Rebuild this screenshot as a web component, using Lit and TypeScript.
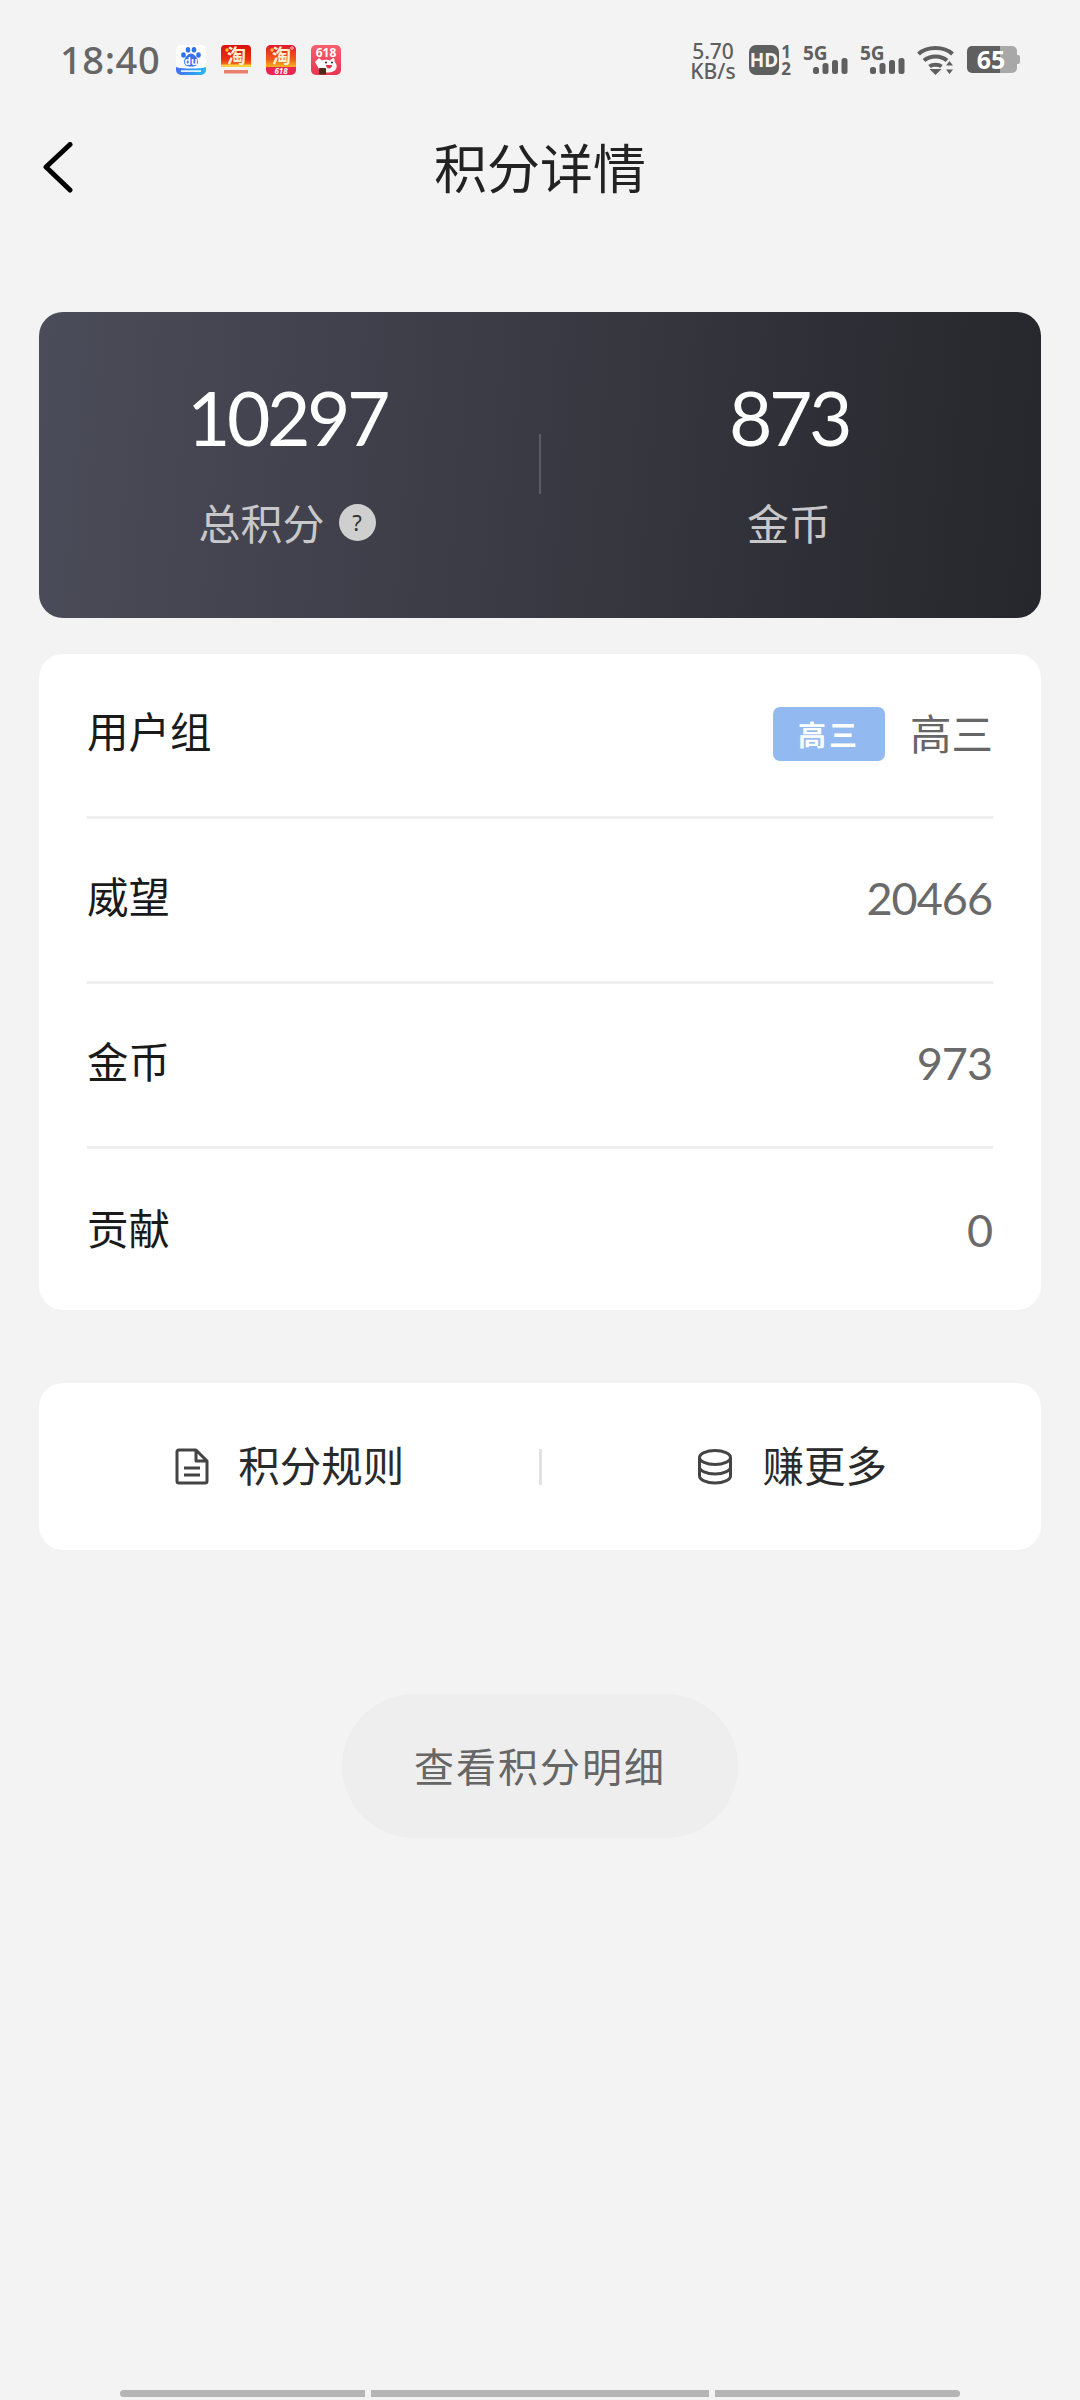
import { LitElement, html, css, svg } from "lit";
import { customElement } from "lit/decorators.js";

const baidu = svg`<svg class="app" viewBox="0 0 30 30">
  <defs><linearGradient id="bd" x1="0" x2="1"><stop offset="0" stop-color="#4a6cf5"/><stop offset="1" stop-color="#22bdf2"/></linearGradient></defs>
  <rect width="30" height="30" rx="5" fill="#fff"/>
  <path d="M0 22c5 2 25 2 30 0v3a5 5 0 0 1-5 5H5a5 5 0 0 1-5-5z" fill="url(#bd)"/>
  <rect x="5" y="25.200" width="20" height="1.800" fill="#dff0ff"/>
  <ellipse cx="7.500" cy="10" rx="2.300" ry="2.800" fill="#2c74ea"/><ellipse cx="12" cy="4.800" rx="2.300" ry="2.800" fill="#2c74ea"/>
  <ellipse cx="18" cy="4.800" rx="2.300" ry="2.800" fill="#2c74ea"/><ellipse cx="22.500" cy="10" rx="2.300" ry="2.800" fill="#2c74ea"/>
  <path d="M15 8.500c-3 0-7 4.500-7 8.500 0 3 2.500 4.500 7 4.500s7-1.500 7-4.500c0-4-4-8.500-7-8.500z" fill="#3b6ff0"/>
  <text x="15" y="19.500" class="du">du</text>
</svg>`;

const tao1 = svg`<svg class="app" viewBox="0 0 30 30">
  <defs><linearGradient id="t1" x1="0" y1="0" x2="0" y2="1"><stop offset="0" stop-color="#d8120e"/><stop offset="0.65" stop-color="#ea2f12"/><stop offset="1" stop-color="#f98e1c"/></linearGradient></defs>
  <path d="M4 0h22a4 4 0 0 1 4 4v18H0V4a4 4 0 0 1 4-4z" fill="url(#t1)"/>
  <rect y="19.500" width="30" height="2.500" fill="#fdd040"/>
  <circle cx="6" cy="5" r="1.700" fill="#ffc928"/>
  <text x="15.500" y="18" class="tao">淘</text>
  <rect x="3" y="25" width="24" height="3.500" fill="#e5604c" opacity=".8"/>
</svg>`;

const tao2 = svg`<svg class="app" viewBox="0 0 30 30">
  <defs><linearGradient id="t2" x1="0" y1="0" x2="0" y2="1"><stop offset="0" stop-color="#e3172d"/><stop offset="0.65" stop-color="#ef5a1a"/><stop offset="1" stop-color="#fbb321"/></linearGradient></defs>
  <rect width="30" height="30" rx="5" fill="#ea2550"/>
  <path d="M0 5a5 5 0 0 1 5-5h20a5 5 0 0 1 5 5v17H0z" fill="url(#t2)"/>
  <circle cx="6" cy="5" r="1.700" fill="#ffc928"/><circle cx="26" cy="3" r="1.300" fill="none" stroke="#fff" stroke-width=".7"/>
  <text x="15.500" y="18" class="tao">淘</text>
  <text x="15" y="29" class="s618">618</text>
</svg>`;

const rabbit = svg`<svg class="app" viewBox="0 0 30 30">
  <defs><linearGradient id="rb" x1="0" y1="0" x2="0" y2="1"><stop offset="0" stop-color="#f6606f"/><stop offset="1" stop-color="#ea3552"/></linearGradient></defs>
  <rect width="30" height="30" rx="5" fill="url(#rb)"/>
  <text x="15" y="12" class="r618">618</text>
  <path d="M4 17l4-4 3 2.500c2-1 6-1 8 0l3-2.500c1.500 0 2 2 1.500 3.500 2 2 3 5 1.500 7.500S20 28 16 27.500c-3-.4-7-1.500-8.500-4.500z" fill="#fff"/>
  <circle cx="15" cy="17.500" r="1" fill="#222"/><circle cx="21" cy="17.500" r="1" fill="#222"/>
  <path d="M15 20h6c0 2-1.300 3.500-3 3.500s-3-1.500-3-3.500z" fill="#e2354d"/>
  <rect x="8" y="23" width="7" height="6.500" rx="1" fill="#4a2b18"/>
</svg>`;

const network = svg`<svg class="net" viewBox="0 0 45 34">
  <text x="0" y="17" class="g5">5G</text>
  <rect x="10" y="24" width="6" height="7" rx="2.500"/><rect x="19.500" y="20" width="6" height="11" rx="2.500"/>
  <rect x="29" y="17" width="6" height="14" rx="2.500"/><rect x="38.500" y="15" width="6" height="16" rx="2.500"/>
</svg>`;

@customElement("app-root")
export class AppRoot extends LitElement {
  static styles = css`
    :host { display: block; width: 1080px; height: 2400px; background: #f3f3f3; font-family: "Noto Sans CJK SC", "Noto Sans", sans-serif; overflow: hidden; position: relative; }
    .status { height: 57px; padding: 31px 0 0 60px; display: flex; align-items: center; }
    .time { font: 500 38px/44px "Noto Sans", sans-serif; color: #666; letter-spacing: .6px; width: 116px; padding-bottom: 2px; }
    .apps { display: flex; gap: 15px; }
    .app { width: 30px; height: 30px; display: block; overflow: visible; }
    .du { font: 700 10px "Noto Sans", sans-serif; fill: #fff; text-anchor: middle; }
    .tao { font: 700 19px "Noto Sans CJK SC", sans-serif; fill: #fff1d0; text-anchor: middle; }
    .s618 { font: italic 700 8px "Noto Sans", sans-serif; fill: #fff; text-anchor: middle; }
    .r618 { font: 700 12px "Noto Sans", sans-serif; fill: #fff; text-anchor: middle; }
    .sys { margin-left: auto; margin-right: 60px; display: flex; align-items: center; color: #5f5f5f; }
    .speed { font: 500 21px/20px "Noto Sans", sans-serif; text-align: center; width: 48px; padding-top: 2px; }
    .hd { margin-left: 12px; width: 42px; height: 30px; display: flex; }
    .hdbox { width: 30px; height: 30px; background: #5f5f5f; border-radius: 7px; color: #f3f3f3; font: 700 19px/30px "Noto Sans", sans-serif; text-align: center; }
    .hdnum { font: 700 17px/17px "Noto Sans", sans-serif; width: 12px; text-align: right; margin-top: -2px; }
    .net { width: 45px; height: 34px; margin-left: 12px; fill: #5f5f5f; display: block; overflow: visible; }
    .g5 { font: 700 19px "Noto Sans", sans-serif; }
    .wifi { width: 38px; height: 30px; margin-left: 12px; display: block; }
    .batt { margin-left: 12px; width: 53px; height: 27px; position: relative; display: flex; }
    .batt svg { display: block; }
    .batt span { position: absolute; left: 8px; top: 0; width: 32px; text-align: center; color: #fff; font: 700 25px/27px "Noto Sans", sans-serif; }

    .nav { height: 164px; display: flex; align-items: center; justify-content: center; position: relative; }
    .back { position: absolute; left: 41px; top: 54px; width: 40px; height: 56px; }
    .title { font-size: 53px; line-height: 64px; color: #222; padding-bottom: 8px; }

    .hero { margin: 60px 39px 0; height: 306px; border-radius: 24px; background: linear-gradient(95deg, #4b4c59 0%, #26272c 100%); display: flex; align-items: flex-start; }
    .col { flex: 1; display: flex; flex-direction: column; align-items: center; padding: 62px 4px 0 0; }
    .big { font: 400 75px/86px "Lato", sans-serif; letter-spacing: -3.500px; color: #fff; }
    .lab { margin-top: 37px; font-size: 42px; line-height: 50px; color: #c8c8ca; display: flex; align-items: center; gap: 14px; }
    .help { width: 37px; height: 37px; border-radius: 50%; background: #cfcfcf; color: #333; font: 400 22px/37px "Noto Sans", sans-serif; text-align: center; }
    .hsep { width: 2px; height: 60px; background: #5a5b64; margin-top: 122px; }

    .card { margin: 36px 39px 0; background: #fff; border-radius: 24px; }
    .info { padding: 0 48px; }
    .row { height: 165px; padding-bottom: 5px; display: flex; align-items: center; justify-content: space-between; border-bottom: 3px solid #efefef; box-sizing: border-box; }
    .row:last-child { border-bottom: none; height: 161px; padding-bottom: 0; }
    .k { font-size: 41.500px; color: #1a1a1a; padding-bottom: 5px; }
    .v { font-size: 41.500px; color: #666; display: flex; align-items: center; gap: 25px; padding-bottom: 2px; }
    .num { font: 400 45px "Lato", sans-serif; letter-spacing: -1px; color: #6a6a6a; margin-right: 1px; }
    .tag { width: 112px; height: 54px; background: #93baf0; border-radius: 7px; color: #fff; font-size: 28px; font-weight: 700; display: flex; align-items: center; justify-content: center; letter-spacing: 3px; margin-top: 4px; }

    .actions { margin-top: 73px; height: 167px; display: flex; align-items: center; }
    .act { flex: 1; display: flex; align-items: center; justify-content: center; gap: 29px; font-size: 41.500px; color: #2a2a2a; }
    .act span { padding-bottom: 5px; }
    .act svg { display: block; margin-left: 2px; }
    .doc { width: 34px; height: 37px; }
    .coin { width: 36px; height: 36px; }
    .vsep { width: 3px; height: 36px; background: #e2e2e2; }

    .more { width: 396px; height: 144px; padding-bottom: 2px; box-sizing: border-box; border-radius: 72px; background: #eeeeee; color: #666; font-size: 40px; margin: 144px auto 0; display: flex; align-items: center; justify-content: center; letter-spacing: 2px; }

    .home { position: absolute; left: 120px; top: 2390px; width: 840px; height: 7px; display: flex; gap: 6px; }
    .home i { display: block; background: #b5b5b5; height: 7px; }
    .home i:first-child { border-radius: 4px 0 0 4px; }
    .home i:last-child { border-radius: 0 4px 4px 0; }
  `;

  render() {
    return html`
      <div class="status">
        <div class="time">18:40</div>
        <div class="apps">${baidu}${tao1}${tao2}${rabbit}</div>
        <div class="sys">
          <div class="speed"><div>5.70</div><div>KB/s</div></div>
          <div class="hd"><div class="hdbox">HD</div><div class="hdnum">1<br />2</div></div>
          ${network}${network}
          <svg class="wifi" viewBox="0 0 38 30">
            <path d="M1.500 9C10 1 27 1 35.500 9M7 15.500c6-5.500 17-5.500 23 0M12.500 21.500c3-2.500 9-2.500 12 0" fill="none" stroke="#5f5f5f" stroke-width="4"/>
            <path d="M12.500 24h12l-6 6zM29 20.500l3.500-4.500 3.500 4.500zM29 24.500h7l-3.500 4.500z" fill="#5f5f5f"/>
          </svg>
          <div class="batt">
            <svg width="53" height="27" viewBox="0 0 53 27">
              <path d="M5 0h28v27H5a5 5 0 0 1-5-5V5a5 5 0 0 1 5-5z" fill="#5f5f5f"/>
              <path d="M33 0h12a5 5 0 0 1 5 5v17a5 5 0 0 1-5 5H33z" fill="#a8a8a8"/>
              <path d="M50 9h1a2 2 0 0 1 2 2v5a2 2 0 0 1-2 2h-1z" fill="#a8a8a8"/>
            </svg>
            <span>65</span>
          </div>
        </div>
      </div>
      <div class="nav">
        <svg class="back" viewBox="0 0 40 56"><path d="M29 2.500L5 25l24 23" fill="none" stroke="#000" stroke-width="5" stroke-linecap="round" stroke-linejoin="round"/></svg>
        <div class="title">积分详情</div>
      </div>
      <div class="hero">
        <div class="col"><div class="big">10297</div><div class="lab">总积分<span class="help">?</span></div></div>
        <div class="hsep"></div>
        <div class="col"><div class="big">873</div><div class="lab">金币</div></div>
      </div>
      <div class="card info">
        <div class="row"><span class="k">用户组</span><span class="v"><span class="tag">高三</span>高三</span></div>
        <div class="row"><span class="k">威望</span><span class="num">20466</span></div>
        <div class="row"><span class="k">金币</span><span class="num">973</span></div>
        <div class="row"><span class="k">贡献</span><span class="num">0</span></div>
      </div>
      <div class="card actions">
        <div class="act">
          <svg class="doc" viewBox="0 0 34 37"><path d="M4 2h17l11 11v20a2 2 0 0 1-2 2H4a2 2 0 0 1-2-2V4a2 2 0 0 1 2-2zM21 2v11h11M9 20h16M9 27h16" fill="none" stroke="#444" stroke-width="3" stroke-linejoin="round"/></svg>
          <span>积分规则</span>
        </div>
        <div class="vsep"></div>
        <div class="act">
          <svg class="coin" viewBox="0 0 36 36" fill="none" stroke="#444" stroke-width="3"><ellipse cx="18" cy="8.500" rx="15.500" ry="7"/><path d="M2.500 8.500v9.500c0 3.800 7 7 15.500 7s15.500-3.200 15.500-7V8.500M2.500 18v9c0 3.800 7 7 15.500 7s15.500-3.200 15.500-7v-9"/></svg>
          <span>赚更多</span>
        </div>
      </div>
      <div class="more">查看积分明细</div>
      <div class="home"><i style="width:245px"></i><i style="width:338px"></i><i style="width:245px"></i></div>
    `;
  }
}
